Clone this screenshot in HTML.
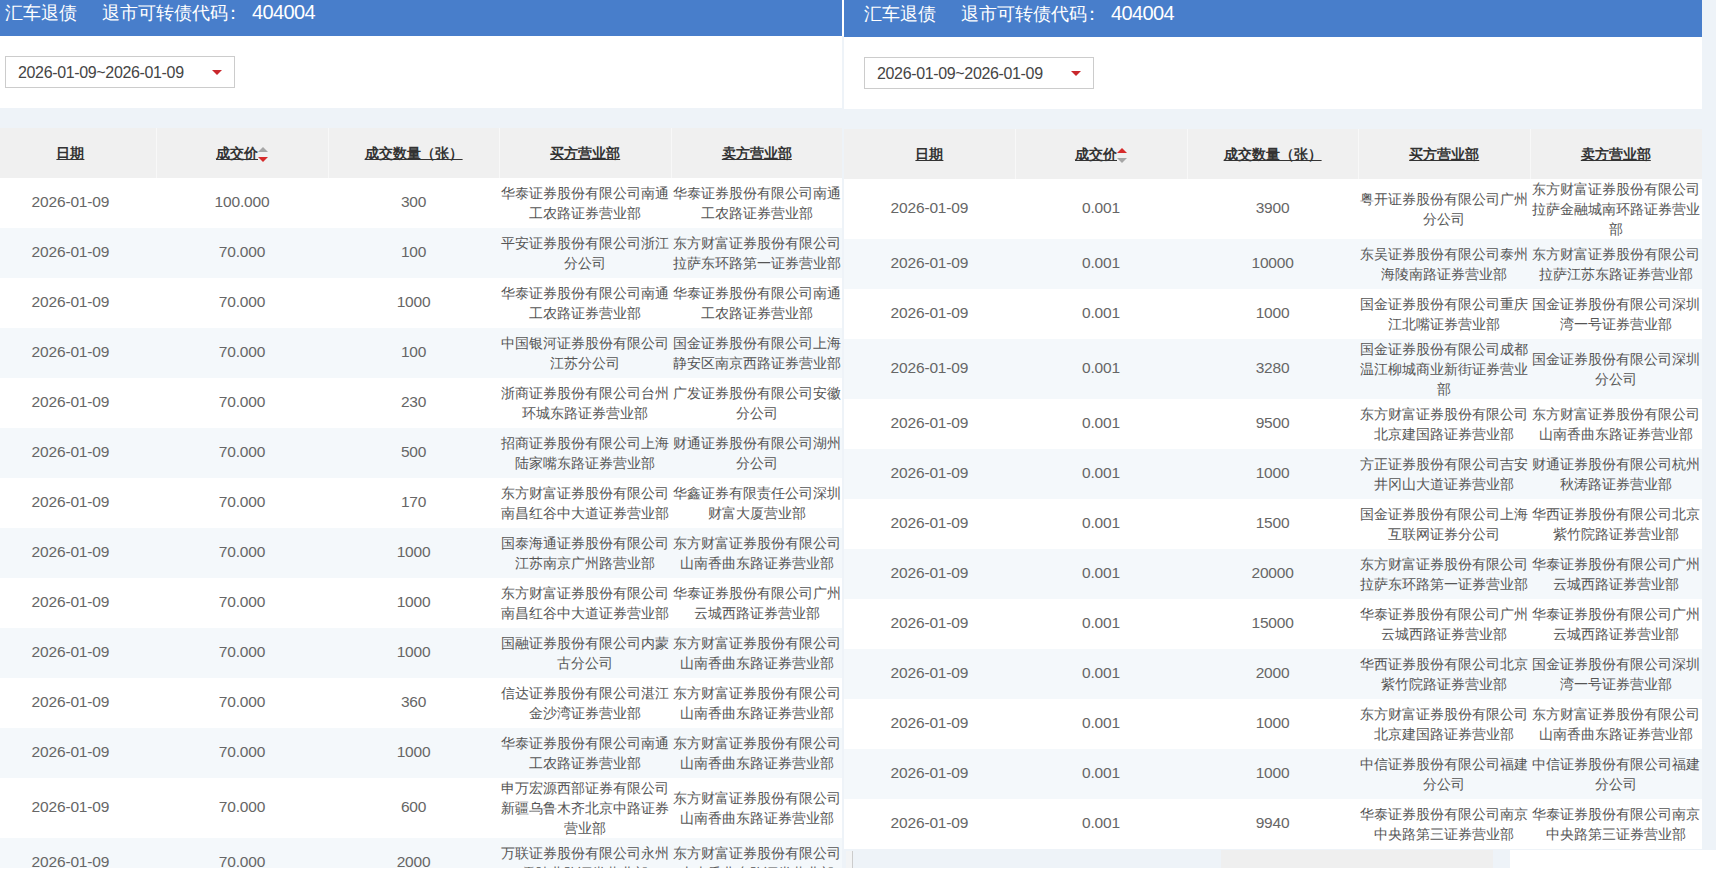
<!DOCTYPE html>
<html><head><meta charset="utf-8"><style>
*{margin:0;padding:0;box-sizing:border-box}
html,body{width:1716px;height:875px;overflow:hidden;background:#fff}
body{position:relative;font-family:"Liberation Sans",sans-serif;color:#555}
.panel{position:absolute;top:0;overflow:hidden;background:#eef3f8}
.title{position:absolute;left:0;top:0;right:0;background:#487ecb;color:#fff;font-size:18px;white-space:nowrap}
.title span{position:absolute;top:0;line-height:26px}
.title .num{font-size:20px;letter-spacing:-0.6px;margin-top:-1px}
.white{position:absolute;left:0;right:0;background:#fff}
.datebox{position:absolute;width:230px;height:32px;border:1px solid #ccc;background:#fff;font-size:16px;letter-spacing:-0.35px;color:#454545}
.datebox span{position:absolute;left:12px;top:7px;line-height:18px}
.datebox i{position:absolute;left:206px;top:13px;width:0;height:0;border-left:5px solid transparent;border-right:5px solid transparent;border-top:5.5px solid #c9272c}
.tbl{position:absolute;width:860px}
.hdr{position:absolute;left:0;width:860px;height:50px;background:#f0f0f0;color:#333;font-weight:bold;font-size:14px}
.h{position:absolute;top:0;height:50px;padding-top:2px;width:171.6px;display:flex;align-items:center;justify-content:center}
.h u{text-decoration:underline;text-underline-offset:1px}
.sep{position:absolute;top:0;width:1px;height:50px;background:#f8f8f8}
.c0{left:0}.c1{left:171.6px}.c2{left:343.2px}.c3{left:514.8px}.c4{left:686.4px}
.sort{position:relative;display:inline-block;width:10px;height:16px;margin-left:0px}
.sort b{position:absolute;left:0;width:0;height:0;border-left:5px solid transparent;border-right:5px solid transparent}
.sort .up{top:1px;border-bottom:5px solid #a6a6a6}
.sort .dn{top:11px;border-top:5px solid #d62b2b}
.sort.r .up{border-bottom-color:#d62b2b}.sort.r .dn{border-top-color:#a6a6a6}
.row{position:absolute;left:0;width:860px;background:#fff}
.row.even{background:#f4f8fb}
.c{position:absolute;top:0;bottom:0;width:171.6px;display:flex;align-items:center;justify-content:center;text-align:center}
.n{font-size:15.5px;letter-spacing:-0.15px;color:#666}
.n span{position:relative;top:-1px}
.t{font-size:14px;line-height:20px}
.t span{position:relative;left:0px}
</style></head><body>
<div class="panel" style="left:0;width:842px;height:868px">
  <div class="white" style="top:0;height:108px"></div>
  <div class="title" style="height:36px"><span style="left:5px">汇车退债</span><span style="left:102px">退市可转债代码</span><span style="left:224px">：</span><span class="num" style="left:252px">404004</span></div>
  <div class="datebox" style="left:5px;top:56px"><span>2026-01-09~2026-01-09</span><i></i></div>
  <div class="tbl" style="left:-15.4px;top:0">
  <div class="hdr" style="top:128px">
<div class="h c0"><u>日期</u></div>
<div class="h c1"><u>成交价</u><i class="sort"><b class="up"></b><b class="dn"></b></i></div>
<div class="h c2"><u>成交数量（张）</u></div>
<div class="h c3"><u>买方营业部</u></div>
<div class="h c4"><u>卖方营业部</u></div>
<div class="sep" style="left:171.6px"></div><div class="sep" style="left:343.2px"></div><div class="sep" style="left:514.8px"></div><div class="sep" style="left:686.4px"></div>
</div>
  <div class="row" style="top:178px;height:50px">
<div class="c n c0"><span>2026-01-09</span></div>
<div class="c n c1"><span>100.000</span></div>
<div class="c n c2"><span>300</span></div>
<div class="c t c3"><span>华泰证券股份有限公司南通<br>工农路证券营业部</span></div>
<div class="c t c4"><span>华泰证券股份有限公司南通<br>工农路证券营业部</span></div>
</div>
<div class="row even" style="top:228px;height:50px">
<div class="c n c0"><span>2026-01-09</span></div>
<div class="c n c1"><span>70.000</span></div>
<div class="c n c2"><span>100</span></div>
<div class="c t c3"><span>平安证券股份有限公司浙江<br>分公司</span></div>
<div class="c t c4"><span>东方财富证券股份有限公司<br>拉萨东环路第一证券营业部</span></div>
</div>
<div class="row" style="top:278px;height:50px">
<div class="c n c0"><span>2026-01-09</span></div>
<div class="c n c1"><span>70.000</span></div>
<div class="c n c2"><span>1000</span></div>
<div class="c t c3"><span>华泰证券股份有限公司南通<br>工农路证券营业部</span></div>
<div class="c t c4"><span>华泰证券股份有限公司南通<br>工农路证券营业部</span></div>
</div>
<div class="row even" style="top:328px;height:50px">
<div class="c n c0"><span>2026-01-09</span></div>
<div class="c n c1"><span>70.000</span></div>
<div class="c n c2"><span>100</span></div>
<div class="c t c3"><span>中国银河证券股份有限公司<br>江苏分公司</span></div>
<div class="c t c4"><span>国金证券股份有限公司上海<br>静安区南京西路证券营业部</span></div>
</div>
<div class="row" style="top:378px;height:50px">
<div class="c n c0"><span>2026-01-09</span></div>
<div class="c n c1"><span>70.000</span></div>
<div class="c n c2"><span>230</span></div>
<div class="c t c3"><span>浙商证券股份有限公司台州<br>环城东路证券营业部</span></div>
<div class="c t c4"><span>广发证券股份有限公司安徽<br>分公司</span></div>
</div>
<div class="row even" style="top:428px;height:50px">
<div class="c n c0"><span>2026-01-09</span></div>
<div class="c n c1"><span>70.000</span></div>
<div class="c n c2"><span>500</span></div>
<div class="c t c3"><span>招商证券股份有限公司上海<br>陆家嘴东路证券营业部</span></div>
<div class="c t c4"><span>财通证券股份有限公司湖州<br>分公司</span></div>
</div>
<div class="row" style="top:478px;height:50px">
<div class="c n c0"><span>2026-01-09</span></div>
<div class="c n c1"><span>70.000</span></div>
<div class="c n c2"><span>170</span></div>
<div class="c t c3"><span>东方财富证券股份有限公司<br>南昌红谷中大道证券营业部</span></div>
<div class="c t c4"><span>华鑫证券有限责任公司深圳<br>财富大厦营业部</span></div>
</div>
<div class="row even" style="top:528px;height:50px">
<div class="c n c0"><span>2026-01-09</span></div>
<div class="c n c1"><span>70.000</span></div>
<div class="c n c2"><span>1000</span></div>
<div class="c t c3"><span>国泰海通证券股份有限公司<br>江苏南京广州路营业部</span></div>
<div class="c t c4"><span>东方财富证券股份有限公司<br>山南香曲东路证券营业部</span></div>
</div>
<div class="row" style="top:578px;height:50px">
<div class="c n c0"><span>2026-01-09</span></div>
<div class="c n c1"><span>70.000</span></div>
<div class="c n c2"><span>1000</span></div>
<div class="c t c3"><span>东方财富证券股份有限公司<br>南昌红谷中大道证券营业部</span></div>
<div class="c t c4"><span>华泰证券股份有限公司广州<br>云城西路证券营业部</span></div>
</div>
<div class="row even" style="top:628px;height:50px">
<div class="c n c0"><span>2026-01-09</span></div>
<div class="c n c1"><span>70.000</span></div>
<div class="c n c2"><span>1000</span></div>
<div class="c t c3"><span>国融证券股份有限公司内蒙<br>古分公司</span></div>
<div class="c t c4"><span>东方财富证券股份有限公司<br>山南香曲东路证券营业部</span></div>
</div>
<div class="row" style="top:678px;height:50px">
<div class="c n c0"><span>2026-01-09</span></div>
<div class="c n c1"><span>70.000</span></div>
<div class="c n c2"><span>360</span></div>
<div class="c t c3"><span>信达证券股份有限公司湛江<br>金沙湾证券营业部</span></div>
<div class="c t c4"><span>东方财富证券股份有限公司<br>山南香曲东路证券营业部</span></div>
</div>
<div class="row even" style="top:728px;height:50px">
<div class="c n c0"><span>2026-01-09</span></div>
<div class="c n c1"><span>70.000</span></div>
<div class="c n c2"><span>1000</span></div>
<div class="c t c3"><span>华泰证券股份有限公司南通<br>工农路证券营业部</span></div>
<div class="c t c4"><span>东方财富证券股份有限公司<br>山南香曲东路证券营业部</span></div>
</div>
<div class="row" style="top:778px;height:60px">
<div class="c n c0"><span>2026-01-09</span></div>
<div class="c n c1"><span>70.000</span></div>
<div class="c n c2"><span>600</span></div>
<div class="c t c3"><span>申万宏源西部证券有限公司<br>新疆乌鲁木齐北京中路证券<br>营业部</span></div>
<div class="c t c4"><span>东方财富证券股份有限公司<br>山南香曲东路证券营业部</span></div>
</div>
<div class="row even" style="top:838px;height:50px">
<div class="c n c0"><span>2026-01-09</span></div>
<div class="c n c1"><span>70.000</span></div>
<div class="c n c2"><span>2000</span></div>
<div class="c t c3"><span>万联证券股份有限公司永州<br>零陵北路证券营业部</span></div>
<div class="c t c4"><span>东方财富证券股份有限公司<br>山南香曲东路证券营业部</span></div>
</div>
  </div>
</div>
<div style="position:absolute;left:842px;top:36px;width:2px;height:832px;background:#eef3f8"></div>
<div style="position:absolute;left:1702px;top:0;width:14px;height:850px;background:#eef3f8"></div>
<div class="panel" style="left:844px;width:858px;height:850px">
  <div class="white" style="top:0;height:109px"></div>
  <div class="title" style="height:37px"><span style="left:20px;top:1px">汇车退债</span><span style="left:117px;top:1px">退市可转债代码</span><span style="left:239px;top:1px">：</span><span class="num" style="left:267px;top:1px">404004</span></div>
  <div class="datebox" style="left:20px;top:57px"><span>2026-01-09~2026-01-09</span><i></i></div>
  <div class="tbl" style="left:-0.4px;top:0">
  <div class="hdr" style="top:129px">
<div class="h c0"><u>日期</u></div>
<div class="h c1"><u>成交价</u><i class="sort r"><b class="up"></b><b class="dn"></b></i></div>
<div class="h c2"><u>成交数量（张）</u></div>
<div class="h c3"><u>买方营业部</u></div>
<div class="h c4"><u>卖方营业部</u></div>
<div class="sep" style="left:171.6px"></div><div class="sep" style="left:343.2px"></div><div class="sep" style="left:514.8px"></div><div class="sep" style="left:686.4px"></div>
</div>
  <div class="row" style="top:179px;height:60px">
<div class="c n c0"><span>2026-01-09</span></div>
<div class="c n c1"><span>0.001</span></div>
<div class="c n c2"><span>3900</span></div>
<div class="c t c3"><span>粤开证券股份有限公司广州<br>分公司</span></div>
<div class="c t c4"><span>东方财富证券股份有限公司<br>拉萨金融城南环路证券营业<br>部</span></div>
</div>
<div class="row even" style="top:239px;height:50px">
<div class="c n c0"><span>2026-01-09</span></div>
<div class="c n c1"><span>0.001</span></div>
<div class="c n c2"><span>10000</span></div>
<div class="c t c3"><span>东吴证券股份有限公司泰州<br>海陵南路证券营业部</span></div>
<div class="c t c4"><span>东方财富证券股份有限公司<br>拉萨江苏东路证券营业部</span></div>
</div>
<div class="row" style="top:289px;height:50px">
<div class="c n c0"><span>2026-01-09</span></div>
<div class="c n c1"><span>0.001</span></div>
<div class="c n c2"><span>1000</span></div>
<div class="c t c3"><span>国金证券股份有限公司重庆<br>江北嘴证券营业部</span></div>
<div class="c t c4"><span>国金证券股份有限公司深圳<br>湾一号证券营业部</span></div>
</div>
<div class="row even" style="top:339px;height:60px">
<div class="c n c0"><span>2026-01-09</span></div>
<div class="c n c1"><span>0.001</span></div>
<div class="c n c2"><span>3280</span></div>
<div class="c t c3"><span>国金证券股份有限公司成都<br>温江柳城商业新街证券营业<br>部</span></div>
<div class="c t c4"><span>国金证券股份有限公司深圳<br>分公司</span></div>
</div>
<div class="row" style="top:399px;height:50px">
<div class="c n c0"><span>2026-01-09</span></div>
<div class="c n c1"><span>0.001</span></div>
<div class="c n c2"><span>9500</span></div>
<div class="c t c3"><span>东方财富证券股份有限公司<br>北京建国路证券营业部</span></div>
<div class="c t c4"><span>东方财富证券股份有限公司<br>山南香曲东路证券营业部</span></div>
</div>
<div class="row even" style="top:449px;height:50px">
<div class="c n c0"><span>2026-01-09</span></div>
<div class="c n c1"><span>0.001</span></div>
<div class="c n c2"><span>1000</span></div>
<div class="c t c3"><span>方正证券股份有限公司吉安<br>井冈山大道证券营业部</span></div>
<div class="c t c4"><span>财通证券股份有限公司杭州<br>秋涛路证券营业部</span></div>
</div>
<div class="row" style="top:499px;height:50px">
<div class="c n c0"><span>2026-01-09</span></div>
<div class="c n c1"><span>0.001</span></div>
<div class="c n c2"><span>1500</span></div>
<div class="c t c3"><span>国金证券股份有限公司上海<br>互联网证券分公司</span></div>
<div class="c t c4"><span>华西证券股份有限公司北京<br>紫竹院路证券营业部</span></div>
</div>
<div class="row even" style="top:549px;height:50px">
<div class="c n c0"><span>2026-01-09</span></div>
<div class="c n c1"><span>0.001</span></div>
<div class="c n c2"><span>20000</span></div>
<div class="c t c3"><span>东方财富证券股份有限公司<br>拉萨东环路第一证券营业部</span></div>
<div class="c t c4"><span>华泰证券股份有限公司广州<br>云城西路证券营业部</span></div>
</div>
<div class="row" style="top:599px;height:50px">
<div class="c n c0"><span>2026-01-09</span></div>
<div class="c n c1"><span>0.001</span></div>
<div class="c n c2"><span>15000</span></div>
<div class="c t c3"><span>华泰证券股份有限公司广州<br>云城西路证券营业部</span></div>
<div class="c t c4"><span>华泰证券股份有限公司广州<br>云城西路证券营业部</span></div>
</div>
<div class="row even" style="top:649px;height:50px">
<div class="c n c0"><span>2026-01-09</span></div>
<div class="c n c1"><span>0.001</span></div>
<div class="c n c2"><span>2000</span></div>
<div class="c t c3"><span>华西证券股份有限公司北京<br>紫竹院路证券营业部</span></div>
<div class="c t c4"><span>国金证券股份有限公司深圳<br>湾一号证券营业部</span></div>
</div>
<div class="row" style="top:699px;height:50px">
<div class="c n c0"><span>2026-01-09</span></div>
<div class="c n c1"><span>0.001</span></div>
<div class="c n c2"><span>1000</span></div>
<div class="c t c3"><span>东方财富证券股份有限公司<br>北京建国路证券营业部</span></div>
<div class="c t c4"><span>东方财富证券股份有限公司<br>山南香曲东路证券营业部</span></div>
</div>
<div class="row even" style="top:749px;height:50px">
<div class="c n c0"><span>2026-01-09</span></div>
<div class="c n c1"><span>0.001</span></div>
<div class="c n c2"><span>1000</span></div>
<div class="c t c3"><span>中信证券股份有限公司福建<br>分公司</span></div>
<div class="c t c4"><span>中信证券股份有限公司福建<br>分公司</span></div>
</div>
<div class="row" style="top:799px;height:50px">
<div class="c n c0"><span>2026-01-09</span></div>
<div class="c n c1"><span>0.001</span></div>
<div class="c n c2"><span>9940</span></div>
<div class="c t c3"><span>华泰证券股份有限公司南京<br>中央路第三证券营业部</span></div>
<div class="c t c4"><span>华泰证券股份有限公司南京<br>中央路第三证券营业部</span></div>
</div>
  </div>
</div>
<div style="position:absolute;left:842px;top:850px;width:668px;height:18px;background:#eef3f8"></div>
<div style="position:absolute;left:846px;top:851px;width:6px;height:17px;background:#f3f4f5"></div><div style="position:absolute;left:852px;top:851px;width:1px;height:17px;background:#ccc"></div>
<div style="position:absolute;left:1221px;top:850px;width:272px;height:18px;background:#efefef"></div>
</body></html>
